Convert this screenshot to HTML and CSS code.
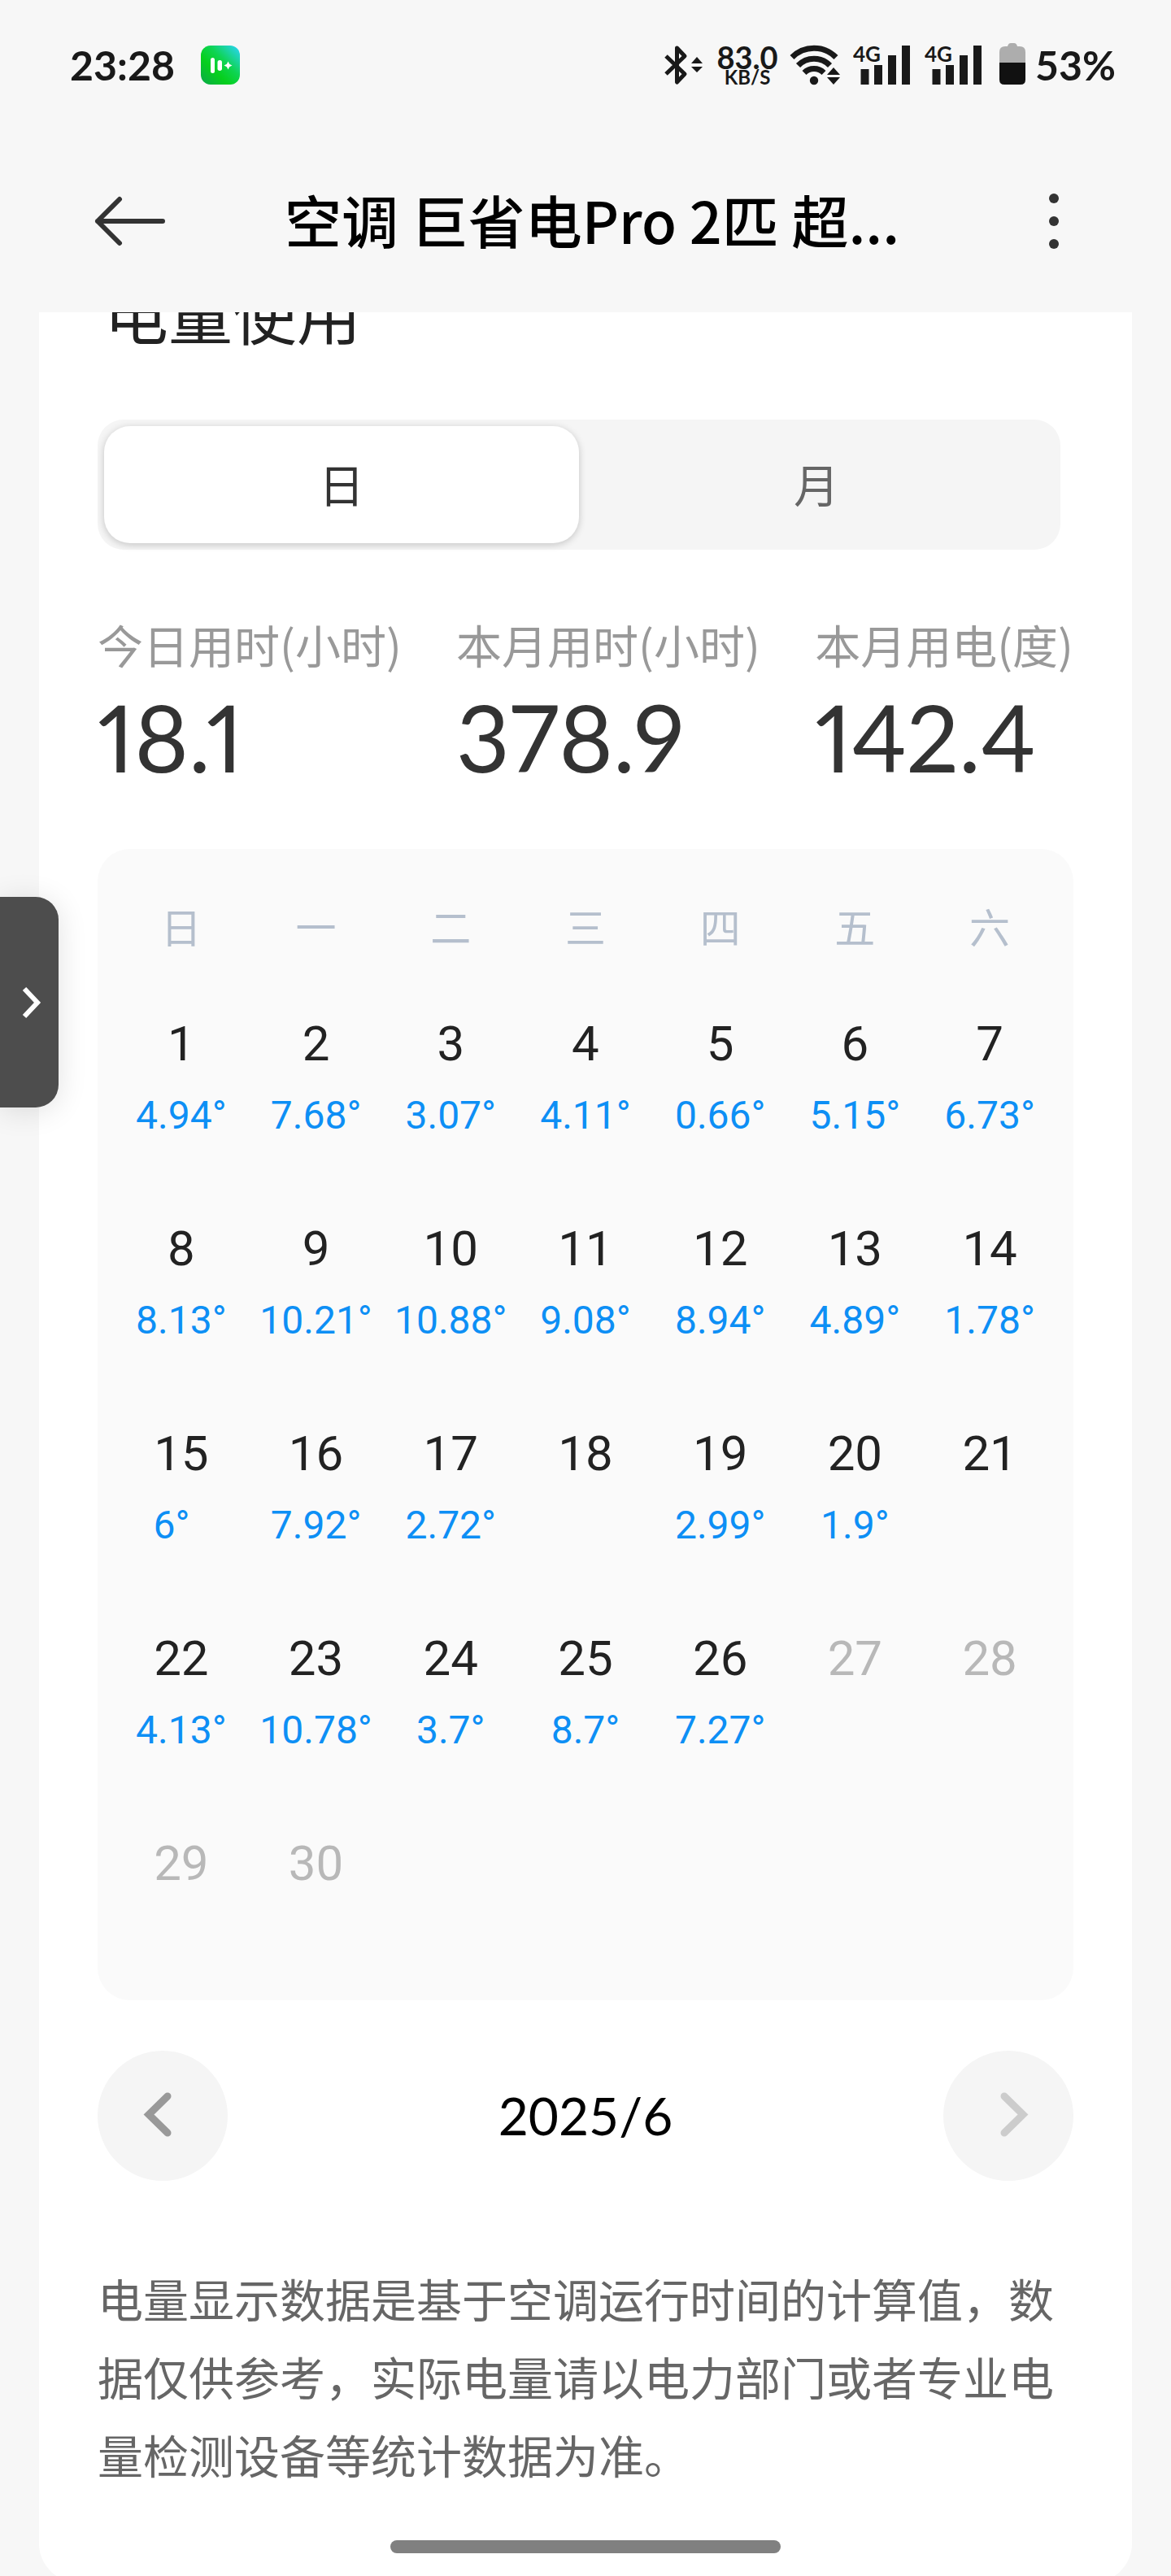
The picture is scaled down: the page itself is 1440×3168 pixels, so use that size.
FILE: index.html
```html
<!DOCTYPE html>
<html lang="zh-CN">
<head>
    <meta charset="UTF-8">
    <meta name="viewport" content="width=device-width, initial-scale=1.0">
    <title>电量使用</title>
    <link rel="stylesheet" href="styles.css">
</head>
<body>
    <div class="app">
        <div class="status-bar">
            <span class="clock">23:28</span>
            <svg class="app-badge" width="48" height="48" viewBox="0 0 48 48">
                <defs>
                    <linearGradient id="badge-fill" x1="0" y1="1" x2="1" y2="0">
                        <stop offset="0" stop-color="#0aa84c"/>
                        <stop offset="0.35" stop-color="#06cf1c"/>
                        <stop offset="0.6" stop-color="#0ed452"/>
                        <stop offset="1" stop-color="#2bd4ff"/>
                    </linearGradient>
                </defs>
                <rect width="48" height="48" rx="12" fill="url(#badge-fill)"/>
                <rect x="12" y="15" width="5" height="19" rx="2.5" fill="#fff"/>
                <rect x="20.500" y="18" width="5.500" height="13" rx="2.700" fill="#fff"/>
                <path d="M33.500 19.500l1.600 3.300 3.400 1.700-3.400 1.700-1.600 3.300-1.600-3.300-3.400-1.700 3.400-1.700z" fill="#fff"/>
            </svg>

            <div class="status-icons">
                <svg width="52" height="60" viewBox="0 0 52 60">
                    <path d="M4 19L27 41 17.500 51V9L27 19 4 41" fill="none" stroke="#191919" stroke-width="5" stroke-linejoin="round"/>
                    <path d="M35 28l7-8 7 8zM35 32l7 7 7-7z" fill="#191919"/>
                </svg>
                <div class="net-speed">
                    <span class="net-value">83.0</span>
                    <span class="net-unit">KB/S</span>
                </div>
                <svg width="66" height="60" viewBox="0 0 66 60">
                    <g fill="none" stroke="#191919" stroke-width="7">
                        <path d="M3 20.500a38 38 0 0 1 54 0"/>
                        <path d="M10.500 30.500a27 27 0 0 1 39 0"/>
                        <path d="M18 39.500a17 17 0 0 1 24 0"/>
                    </g>
                    <circle cx="30" cy="49" r="5.200" fill="#191919"/>
                    <path d="M46 42l8-9 8 9zM46 45l8 9 8-9z" fill="#191919" stroke="#f7f7f7" stroke-width="2" paint-order="stroke"/>
                </svg>
                <svg width="76" height="60" viewBox="0 0 76 60">
                    <text class="net-type" x="0" y="26">4G</text>
                    <path d="M9.500 35h10v19h-10zM26 30h10v24H26zM43 18h10v36H43zM60 6h10v48H60z" fill="#191919"/>
                </svg>
                <svg width="76" height="60" viewBox="0 0 76 60">
                    <text class="net-type" x="0" y="26">4G</text>
                    <path d="M9.500 35h10v19h-10zM26 30h10v24H26zM43 18h10v36H43zM60 6h10v48H60z" fill="#191919"/>
                </svg>
                <svg width="36" height="60" viewBox="0 0 36 60">
                    <path d="M4 27V14q0-7 7-7h3q1-4 4-4h4q3 0 4 4h3q7 0 7 7v13z" fill="#adadad"/>
                    <path d="M4 27h32v21q0 6-6 6H10q-6 0-6-6z" fill="#111"/>
                </svg>
                <span class="battery-level">53%</span>
            </div>
        </div>

        <header class="title-bar">
            <button class="icon-btn" type="button" aria-label="返回">
                <svg width="88" height="64" viewBox="0 0 88 64">
                    <path d="M31 5L4 32l27 27M4 32h80" fill="none" stroke="#333" stroke-width="6" stroke-linecap="round" stroke-linejoin="round"/>
                </svg>
            </button>
            <h1 class="title">空调 巨省电Pro 2匹 超...</h1>
            <button class="icon-btn" type="button" aria-label="更多">
                <svg width="88" height="72" viewBox="0 0 88 72" fill="#333">
                    <circle cx="44" cy="8" r="6"/>
                    <circle cx="44" cy="36" r="6"/>
                    <circle cx="44" cy="64" r="6"/>
                </svg>
            </button>
        </header>

        <main class="content">
            <section class="card">
                <h2 class="card-title">电量使用</h2>

                <div class="segmented">
                    <button class="segment active" type="button" aria-pressed="true">日</button>
                    <button class="segment" type="button" aria-pressed="false">月</button>
                </div>

                <div class="stats">
                    <div class="stat">
                        <div class="stat-label">今日用时(小时)</div>
                        <div class="stat-value">18.1</div>
                    </div>
                    <div class="stat">
                        <div class="stat-label">本月用时(小时)</div>
                        <div class="stat-value">378.9</div>
                    </div>
                    <div class="stat">
                        <div class="stat-label">本月用电(度)</div>
                        <div class="stat-value">142.4</div>
                    </div>
                </div>

                <div class="calendar">
                    <table class="calendar-table">
                        <thead>
                            <tr><th>日</th><th>一</th><th>二</th><th>三</th><th>四</th><th>五</th><th>六</th></tr>
                        </thead>
                        <tbody>
                            <tr>
                                <td><div class="day">1</div><div class="usage">4.94°</div></td>
                                <td><div class="day">2</div><div class="usage">7.68°</div></td>
                                <td><div class="day">3</div><div class="usage">3.07°</div></td>
                                <td><div class="day">4</div><div class="usage">4.11°</div></td>
                                <td><div class="day">5</div><div class="usage">0.66°</div></td>
                                <td><div class="day">6</div><div class="usage">5.15°</div></td>
                                <td><div class="day">7</div><div class="usage">6.73°</div></td>
                            </tr>
                            <tr>
                                <td><div class="day">8</div><div class="usage">8.13°</div></td>
                                <td><div class="day">9</div><div class="usage">10.21°</div></td>
                                <td><div class="day">10</div><div class="usage">10.88°</div></td>
                                <td><div class="day">11</div><div class="usage">9.08°</div></td>
                                <td><div class="day">12</div><div class="usage">8.94°</div></td>
                                <td><div class="day">13</div><div class="usage">4.89°</div></td>
                                <td><div class="day">14</div><div class="usage">1.78°</div></td>
                            </tr>
                            <tr>
                                <td><div class="day">15</div><div class="usage">6°&nbsp;&nbsp;</div></td>
                                <td><div class="day">16</div><div class="usage">7.92°</div></td>
                                <td><div class="day">17</div><div class="usage">2.72°</div></td>
                                <td><div class="day">18</div></td>
                                <td><div class="day">19</div><div class="usage">2.99°</div></td>
                                <td><div class="day">20</div><div class="usage">1.9°</div></td>
                                <td><div class="day">21</div></td>
                            </tr>
                            <tr>
                                <td><div class="day">22</div><div class="usage">4.13°</div></td>
                                <td><div class="day">23</div><div class="usage">10.78°</div></td>
                                <td><div class="day">24</div><div class="usage">3.7°</div></td>
                                <td><div class="day">25</div><div class="usage">8.7°</div></td>
                                <td><div class="day">26</div><div class="usage">7.27°</div></td>
                                <td><div class="day future">27</div></td>
                                <td><div class="day future">28</div></td>
                            </tr>
                            <tr>
                                <td><div class="day future">29</div></td>
                                <td><div class="day future">30</div></td>
                                <td></td>
                                <td></td>
                                <td></td>
                                <td></td>
                                <td></td>
                            </tr>
                        </tbody>
                    </table>
                </div>

                <div class="pager">
                    <button class="pager-btn" type="button" aria-label="上个月">
                        <svg width="160" height="160" viewBox="0 0 160 160">
                            <path d="M86 56L63 78.500 86 101" fill="none" stroke="#999" stroke-width="9" stroke-linecap="round"/>
                        </svg>
                    </button>
                    <span class="pager-month">2025/6</span>
                    <button class="pager-btn" type="button" aria-label="下个月" disabled>
                        <svg width="160" height="160" viewBox="0 0 160 160">
                            <path d="M75 56l23 22.500L75 101" fill="none" stroke="#ccc" stroke-width="9" stroke-linecap="round"/>
                        </svg>
                    </button>
                </div>

                <p class="note">电量显示数据是基于空调运行时间的计算值，数据仅供参考，实际电量请以电力部门或者专业电量检测设备等统计数据为准。</p>
            </section>
        </main>

        <button class="side-handle" type="button" aria-label="展开侧边栏">
            <svg width="72" height="60" viewBox="0 0 72 60">
                <path d="M30 13l16 17-16 17" fill="none" stroke="#fff" stroke-width="6"/>
            </svg>
        </button>
        <div class="home-indicator"></div>
    </div>
</body>
</html>
```
FILE: styles.css
```css
* {
    box-sizing: border-box;
}
body {
    margin: 0;
    background-color: #f7f7f7;
    color: #333;
    font-family: "Noto Sans CJK SC", sans-serif;
}
button {
    border: none;
    background: none;
    padding: 0;
    font-family: inherit;
    color: inherit;
}
svg {
    display: block;
}
.app {
    position: relative;
    display: flex;
    flex-direction: column;
    height: 100vh;
    overflow: hidden;
}

/* status bar */
.status-bar {
    display: flex;
    align-items: center;
    height: 160px;
    padding: 0 68px 0 86px;
    color: #191919;
    font-family: Lato, sans-serif;
    font-weight: 700;
    flex-shrink: 0;
}
.clock,
.battery-level {
    font-size: 50px;
    line-height: 60px;
}
.app-badge {
    margin-left: 32px;
}
.status-icons {
    display: flex;
    align-items: center;
    gap: 12px;
    margin-left: auto;
}
.net-speed {
    display: flex;
    flex-direction: column;
    align-items: center;
    width: 80px;
}
.net-value {
    font-size: 38px;
    line-height: 30px;
}
.net-unit {
    font-size: 24px;
    line-height: 20px;
}
.net-type {
    font-size: 26px;
    font-weight: 700;
    fill: #191919;
}

/* title bar */
.title-bar {
    display: flex;
    align-items: center;
    height: 224px;
    padding: 0 100px 0 116px;
    flex-shrink: 0;
}
.icon-btn {
    flex-shrink: 0;
}
.title {
    flex: 1;
    margin: 0;
    padding-bottom: 4px;
    font-size: 70px;
    line-height: 100px;
    font-weight: 500;
    text-align: center;
    white-space: nowrap;
    color: #000;
}

/* card */
.content {
    flex: 1;
    min-height: 0;
    padding: 0 48px;
    overflow: hidden;
}
.card {
    margin-top: -100px;
    padding: 44px 72px 110px;
    background: #fff;
    border-radius: 48px;
}
.card-title {
    margin: 0 0 76px;
    padding: 0 8px;
    font-size: 79px;
    line-height: 112px;
    font-weight: 400;
    color: #222;
}
.segmented {
    display: flex;
    height: 160px;
    margin-right: 16px;
    padding: 8px;
    background: #f5f5f5;
    border-radius: 32px;
}
.segment {
    flex: 1;
    padding-bottom: 6px;
    border-radius: 32px;
    font-size: 56px;
    color: #666;
}
.segment.active {
    background: #fff;
    color: #333;
    box-shadow: 0 2px 10px rgba(0, 0, 0, 0.2);
}
.stats {
    display: flex;
    justify-content: space-between;
    margin-top: 76px;
}
.stat-label {
    font-size: 56px;
    line-height: 80px;
    color: #999;
}
.stat-value {
    margin-top: 14px;
    font-family: Lato, sans-serif;
    font-size: 114px;
    font-variant-numeric: proportional-nums;
    line-height: 120px;
}

/* calendar */
.calendar {
    margin-top: 78px;
    padding: 40px 20px 0;
    background: #fafafa;
    border-radius: 40px;
}
.calendar-table {
    width: 100%;
    table-layout: fixed;
    border-collapse: collapse;
    font-family: Roboto, "Noto Sans CJK SC", sans-serif;
    text-align: center;
}
.calendar-table th {
    height: 116px;
    padding: 0 0 8px;
    font-size: 50px;
    font-weight: 400;
    color: #b5bfcd;
}
.calendar-table td {
    height: 252px;
    padding: 48px 0 0;
    vertical-align: top;
}
.day {
    font-size: 60px;
    line-height: 72px;
    color: #222;
}
.day.future {
    color: #b8b8b8;
}
.usage {
    margin-top: 22px;
    font-size: 48px;
    line-height: 60px;
    color: #0d8ff5;
    white-space: nowrap;
}

/* month pager */
.pager {
    display: flex;
    align-items: center;
    justify-content: space-between;
    margin-top: 62px;
}
.pager-btn {
    width: 160px;
    height: 160px;
    border-radius: 50%;
    background: #f5f5f5;
}
.pager-month {
    font-family: Lato, sans-serif;
    font-size: 64px;
    line-height: 96px;
    color: #000;
}
.note {
    margin: 96px 0 0;
    font-size: 56px;
    line-height: 96px;
    color: #666;
}

/* overlays */
.side-handle {
    position: absolute;
    left: 0;
    top: 1103px;
    display: flex;
    align-items: center;
    width: 72px;
    height: 259px;
    border-radius: 0 28px 28px 0;
    background: #4d4d4d;
    box-shadow: 0 4px 36px rgba(0, 0, 0, 0.12);
}
.home-indicator {
    position: absolute;
    left: 50%;
    bottom: 28px;
    width: 480px;
    height: 16px;
    margin-left: -240px;
    border-radius: 8px;
    background: #808080;
}
```
